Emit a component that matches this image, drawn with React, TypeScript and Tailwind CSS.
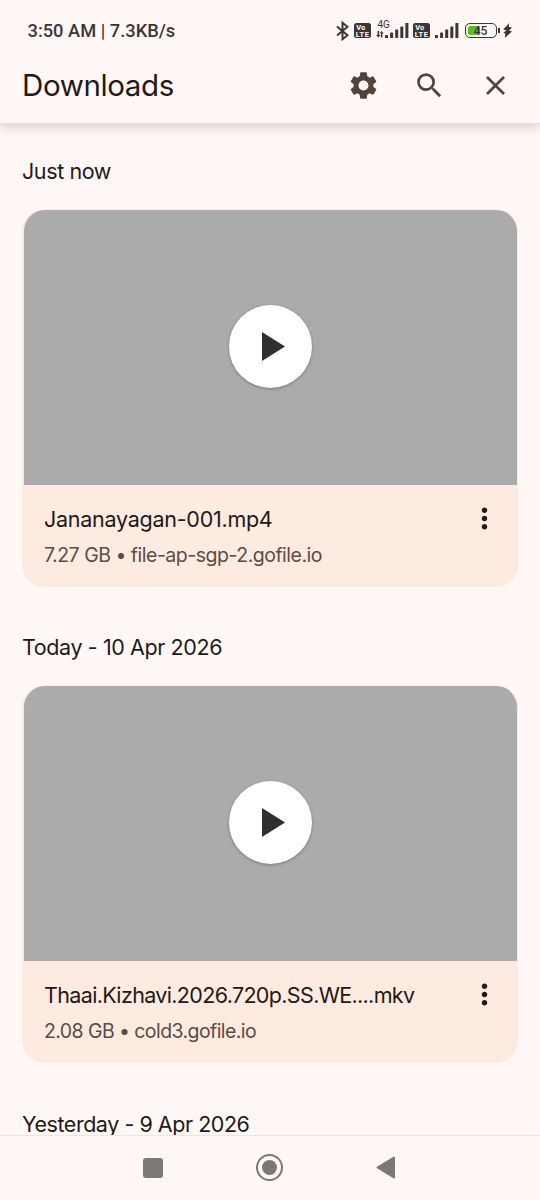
import { MdMoreVert, MdSearch, MdSettings } from "react-icons/md"

type Download = {
  heading: string
  name: string
  nameTracking: string
  details: string
  detailsTracking: string
}

const downloads: Download[] = [
  {
    heading: "Just now",
    name: "Jananayagan-001.mp4",
    nameTracking: "tracking-[-0.26px]",
    details: "7.27 GB • file-ap-sgp-2.gofile.io",
    detailsTracking: "tracking-[-0.5px]",
  },
  {
    heading: "Today - 10 Apr 2026",
    name: "Thaai.Kizhavi.2026.720p.SS.WE....mkv",
    nameTracking: "tracking-[-0.65px]",
    details: "2.08 GB • cold3.gofile.io",
    detailsTracking: "tracking-[-0.58px]",
  },
]

function VoLte() {
  return (
    <svg className="h-[15px] w-[17px]" viewBox="0 0 17 15">
      <rect width="17" height="15" rx="2.5" fill="#3b3636" />
      <g fontSize="7.4" fontWeight="700" fill="#fff" fontFamily="Roboto, sans-serif">
        <text x="2.2" y="7" textLength="9">Vo</text>
        <text x="1.8" y="13.6" textLength="13.2">LTE</text>
      </g>
    </svg>
  )
}

function SignalBars() {
  return (
    <svg className="h-[15px] w-[24px]" viewBox="0 0 24 15" fill="#3b3636">
      <rect x="0" y="12" width="3" height="3" rx="0.6" />
      <rect x="5.1" y="9.5" width="3" height="5.5" rx="0.6" />
      <rect x="10.2" y="6.5" width="3" height="8.5" rx="0.6" />
      <rect x="15.3" y="3.5" width="3" height="11.5" rx="0.6" />
      <rect x="20.4" y="0" width="3" height="15" rx="0.6" />
    </svg>
  )
}

function StatusBar() {
  return (
    <div className="flex h-[46px] items-center pt-[15px] pl-[27.5px] font-[Roboto,sans-serif] text-[#3b3636]">
      <span className="w-[308px] text-[18.3px] leading-[30px] font-medium whitespace-nowrap">
        3:50 AM | 7.3KB/s
      </span>
      <svg className="h-5 w-[13px]" viewBox="0 0 13 20" fill="none" stroke="currentColor" strokeWidth="2">
        <path d="M1 5.5L11.5 14.2L6.5 18.2V1.8L11.5 5.8L1 14.5" />
      </svg>
      <div className="ml-[5px]">
        <VoLte />
      </div>
      <div className="relative ml-[5px] flex w-[33px] justify-end">
        <span className="absolute -top-[4px] left-[2px] text-[10px] leading-3">4G</span>
        <svg className="absolute top-[8px] left-0 h-[7px] w-[8px]" viewBox="0 0 8 7" fill="currentColor">
          <path d="M1.6 0h1.6v4h1.4L2.4 6.5 0 4h1.6z" />
          <path d="M4.9 6.5h1.5v-4h1.4L5.6 0 4.2 1.6l.7.9z" />
        </svg>
        <SignalBars />
      </div>
      <div className="ml-1">
        <VoLte />
      </div>
      <div className="ml-[5px]">
        <SignalBars />
      </div>
      <div className="ml-[6px] flex items-center">
        <div className="relative flex h-[15px] w-[32px] items-center justify-center rounded-[5px] border-[1.5px] border-[#3b3636]">
          <div className="absolute top-[2px] left-[2px] h-[9px] w-[12px] rounded-[2px] bg-[#55c11f]" />
          <span className="relative text-[12px] leading-none font-medium">45</span>
        </div>
        <div className="ml-px h-[5px] w-[2px] bg-[#3b3636]" />
      </div>
      <svg className="ml-[3.5px] h-[15px] w-[9px]" viewBox="0 0 9 15" fill="currentColor">
        <path d="M6.4 0L0.2 6.6L3.4 7.3L0.2 10L2.4 10.6L1.8 15L9 8.4L6 7.4L9 4.6L5.7 4.1Z" />
      </svg>
    </div>
  )
}

function Card({ item }: { item: Download }) {
  return (
    <section className="h-[476.4px] px-[22px]">
      <h2 className="h-[85px] pt-[32px] text-[21.5px] leading-[30px] tracking-[-0.4px] whitespace-nowrap">
        {item.heading}
      </h2>
      <article className="h-[378px] rounded-[22px] bg-[#fdeae1] px-[1.5px] pt-px">
        <div className="flex h-[275px] items-center justify-center rounded-t-[21px] bg-[#ababab] pb-[2px]">
          <div className="flex size-[83px] items-center justify-center rounded-full bg-white shadow-[0_1px_3px_rgba(0,0,0,0.3)]">
            <svg className="ml-[6px] h-[29px] w-[23px]" viewBox="0 0 23 29">
              <path d="M0 0L23 14.5L0 29Z" fill="#2f2f2f" />
            </svg>
          </div>
        </div>
        <div className="flex justify-between pt-[17px] pr-[15.5px] pl-[20.5px]">
          <div className="whitespace-nowrap">
            <p className={`h-[36px] text-[21.5px] leading-[34px] text-[#231914] ${item.nameTracking}`}>{item.name}</p>
            <p className={`text-[19.5px] leading-[34px] text-[#5d4a43] ${item.detailsTracking}`}>{item.details}</p>
          </div>
          <button aria-label="More options" className="h-[32px] text-[#231914]">
            <MdMoreVert size={33} />
          </button>
        </div>
      </article>
    </section>
  )
}

export default function App() {
  return (
    <div className="flex h-[1200px] w-[540px] flex-col overflow-hidden bg-[#fff8f6] font-[Inter,sans-serif] text-[#1f1a18]">
      <header className="relative z-10 h-[124px] shrink-0 border-b border-[#e5dedc] bg-[#fff8f6] shadow-[0_3px_11px_rgba(60,30,20,0.2)]">
        <StatusBar />
        <div className="flex h-[78px] items-center justify-between pr-[28px] pl-[22px]">
          <h1 className="pt-[2px] text-[29.5px] leading-none tracking-[-0.38px]">Downloads</h1>
          <div className="flex items-center gap-[33px] text-[#52433d]">
            <MdSettings size={33} />
            <MdSearch size={33} />
            <svg className="size-[33px]" viewBox="0 0 24 24" fill="currentColor">
              <path d="M6.5 18.9L5.1 17.5l5.5-5.5-5.5-5.5L6.5 5.1l5.5 5.5 5.5-5.5 1.4 1.4-5.5 5.5 5.5 5.5-1.4 1.4-5.5-5.5Z" />
            </svg>
          </div>
        </div>
      </header>

      <main className="min-h-0 flex-1 overflow-hidden">
        {downloads.map((item) => (
          <Card key={item.name} item={item} />
        ))}
        <h2 className="pt-[32px] pl-[22px] text-[21.5px] leading-[30px] tracking-[-0.46px] whitespace-nowrap">
          Yesterday - 9 Apr 2026
        </h2>
      </main>

      <nav className="relative h-[65px] shrink-0 border-t border-[#ebe5e3] bg-[#fff8f6]">
        <div className="flex items-center pt-[18px] pl-[143px]">
          <div className="size-5 rounded-[3px] bg-[#7c7877]" />
          <div className="ml-[93px] flex size-[27px] items-center justify-center rounded-full border-2 border-[#7c7877]">
            <div className="size-[15px] rounded-full bg-[#7c7877]" />
          </div>
          <svg className="ml-[93px] h-[23px] w-[19px]" viewBox="0 0 19 23">
            <path d="M18 1.5V21.5L1.5 11.5Z" fill="#7c7877" stroke="#7c7877" strokeWidth="2" strokeLinejoin="round" />
          </svg>
        </div>
      </nav>
    </div>
  )
}
